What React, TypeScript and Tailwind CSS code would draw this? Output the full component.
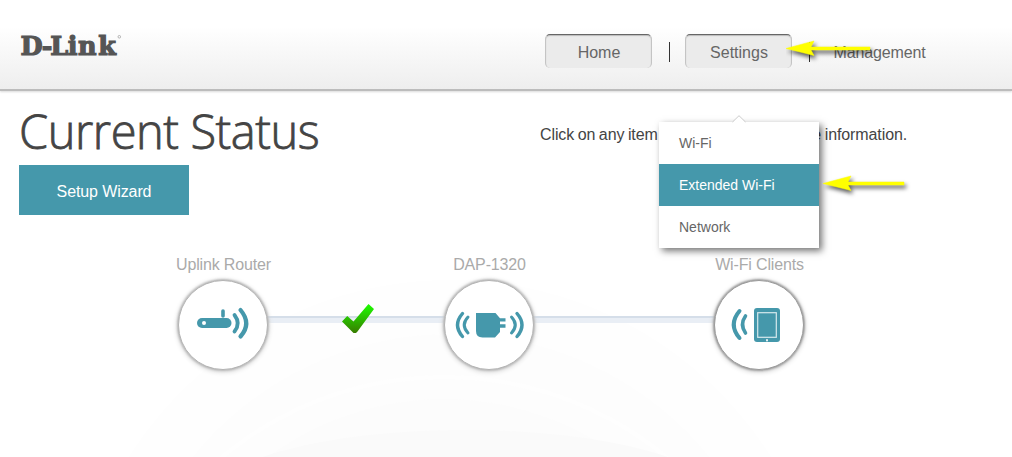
import React from 'react';

const Divider = () => <div className="-mr-px ml-px mt-[8px] h-5 w-px bg-[#333333]" />;

const NavButton = ({ label, raised }: { label: string; raised?: boolean }) => (
  <a
    className={
      raised
        ? 'flex h-[34px] w-[107px] items-center justify-center rounded-[5px] border-x border-t border-x-[#c4c4c4] border-t-[#666666] bg-[#ebebeb] pt-[2px] pl-px shadow-[inset_0_1px_1px_#bbbbbb]'
        : 'flex h-[34px] w-[107px] items-center justify-center border-t border-transparent pt-[2px] pl-[2px] tracking-[-0.15px]'
    }
  >
    {label}
  </a>
);

const menuItems = ['Wi-Fi', 'Extended Wi-Fi', 'Network'];

const SettingsMenu = () => (
  <div className="absolute top-[122px] left-[659px] w-[160px] bg-white text-sm text-[#666666] shadow-[3px_3px_7px_rgba(0,0,0,0.55)]">
    <svg className="absolute -top-[7px] left-[73px]" width="14" height="9" viewBox="0 0 14 9">
      <path d="M0.5 7.5L7 1L13.5 7.5V9H0.5Z" fill="#fff" />
      <path d="M0.5 7L7 0.7L13.5 7" fill="none" stroke="#cccccc" />
    </svg>
    {menuItems.map((item) => (
      <div
        key={item}
        className={
          item === 'Extended Wi-Fi'
            ? 'relative flex h-[42px] items-center bg-[#4598ab] px-5 text-white'
            : 'relative flex h-[42px] items-center px-5'
        }
      >
        {item}
      </div>
    ))}
  </div>
);

const RouterIcon = () => (
  <svg className="shrink-0" width="90" height="90" viewBox="0 0 90 90" fill="none" stroke="#4598ab" strokeLinecap="round">
    <rect x="19" y="38" width="34.5" height="10" rx="5" fill="#4598ab" stroke="none" />
    <circle cx="26" cy="43" r="2" fill="#fff" stroke="none" />
    <path d="M45 31V36" strokeWidth="3.6" />
    <path d="M56.5 35Q63 43.5 56.5 51.5" strokeWidth="3.8" />
    <path d="M62.5 30Q74 43.5 62.5 56.5" strokeWidth="4.2" />
  </svg>
);

const PlugIcon = () => (
  <svg className="shrink-0" width="90" height="90" viewBox="0 0 90 90" fill="none" stroke="#4598ab" strokeLinecap="round">
    <path
      d="M32 33H51.5L56 38.2H61.5V41.6H56V44.2H61.5V47.8H56V52L51 57.5H38.5Q32 57.5 32 51Z"
      fill="#4598ab"
      stroke="none"
    />
    <path d="M24 37Q16.5 45 24 53" strokeWidth="3" />
    <path d="M18.5 33.5Q8.5 45 18.5 56.5" strokeWidth="3.4" />
    <path d="M67.5 37Q75 45 67.5 53" strokeWidth="3" />
    <path d="M73 33.5Q83 45 73 56.5" strokeWidth="3.4" />
  </svg>
);

const TabletIcon = () => (
  <svg className="shrink-0" width="90" height="90" viewBox="0 0 90 90" fill="none" stroke="#4598ab" strokeLinecap="round">
    <rect x="40" y="28" width="26" height="34" rx="3" fill="#4598ab" stroke="none" />
    <rect x="43.7" y="32.7" width="18.6" height="24.6" stroke="#d5e9ed" strokeWidth="1.2" />
    <path d="M53 60V60.5" stroke="#fff" strokeWidth="1.8" />
    <path d="M31.5 36Q25.5 44.5 31.5 53" strokeWidth="3.6" />
    <path d="M25.5 31Q14 44.5 25.5 58" strokeWidth="4" />
  </svg>
);

const Node = ({ label, dark, children }: { label: string; dark?: boolean; children: React.ReactNode }) => (
  <div className="relative z-10 flex w-[90px] shrink-0 flex-col items-center gap-[5px]">
    <div className="h-5 pl-px text-base leading-5 tracking-[-0.15px] whitespace-nowrap text-[#aaaaaa]">{label}</div>
    <div
      className={
        dark
          ? 'flex h-[90px] w-[90px] items-center justify-center rounded-full border border-[#9a9a9a] bg-white shadow-[0_0_2px_1px_#a0a0a0,0_1px_5px_1px_#cfcfcf]'
          : 'flex h-[90px] w-[90px] items-center justify-center rounded-full border border-[#b4b4b4] bg-white shadow-[0_0_2px_1px_#bbbbbb,0_1px_5px_1px_#d6d6d6]'
      }
    >
      {children}
    </div>
  </div>
);

const Link = ({ className }: { className: string }) => (
  <div className={`-mx-2 mt-[61px] h-[7px] shrink-0 border-t-2 border-[#d5dee9] bg-[#e9eef5] ${className}`} />
);

const CheckMark = () => (
  <svg className="absolute top-[303px] left-[341px]" width="34" height="31" viewBox="0 0 34 31">
    <defs>
      <linearGradient id="check" x1="0" y1="0" x2="0" y2="1">
        <stop offset="0" stopColor="#1cff00" />
        <stop offset="1" stopColor="#387c00" />
      </linearGradient>
    </defs>
    <path d="M1 18.5L6.2 13L12.5 18.5L27.5 1L33 6L16.5 28.5L15 30H12.5Z" fill="url(#check)" />
  </svg>
);

const Arrow = ({ className, width }: { className: string; width: number }) => (
  <svg className={className} width={width + 12} height="26" viewBox={`0 0 ${width + 12} 26`}>
    <path
      d={`M0 8.5L28 1L25 7H${width}V10H25L28 15.5Z`}
      fill="#ffff00"
      stroke="#ffff00"
      strokeWidth="0.5"
      className="drop-shadow-[2px_3px_2px_rgba(0,0,0,0.65)]"
    />
  </svg>
);

// Faint concentric rings behind the diagram
const Rings = () => (
  <svg className="absolute inset-0 -z-10" width="1012" height="457" viewBox="0 0 1012 457">
    <circle cx="450" cy="660" r="380" fill="#fefefe" />
    <circle cx="451" cy="667" r="333" fill="#fdfdfd" />
    <circle cx="444" cy="725" r="348" fill="none" stroke="#fefefe" strokeWidth="4" />
    <circle cx="444" cy="695" r="296" fill="#fcfcfc" />
    <ellipse cx="465" cy="500" rx="257" ry="70" fill="#fafafa" />
  </svg>
);

const App = () => {
  return (
    <div className="relative isolate h-[457px] w-[1012px] overflow-hidden bg-white font-['Liberation_Sans',Arial,sans-serif]">
      <Rings />

      <header className="flex h-[91px] items-start border-b-2 border-[#bcbcbc] bg-linear-to-b from-white from-30% to-[#eeeeee] pl-5 shadow-[0_1px_2px_rgba(0,0,0,0.15)]">
        <svg className="mt-[32px] shrink-0" width="104" height="28" viewBox="0 0 104 28">
          <text
            x="0.5 21.7 30.2 47.8 58 78.3"
            y="22.8"
            fontFamily="'DejaVu Serif', serif"
            fontWeight="bold"
            fontSize="25.5"
            fill="#555555"
            stroke="#555555"
            strokeWidth="1.2"
          >
            D-Link
          </text>
          <circle cx="99.3" cy="4.8" r="1.3" fill="none" stroke="#999999" strokeWidth="0.7" />
        </svg>
        <nav className="mt-[34px] ml-[421px] flex gap-4 text-base text-[#666666]">
          <NavButton label="Home" raised />
          <Divider />
          <NavButton label="Settings" raised />
          <Divider />
          <NavButton label="Management" />
        </nav>
      </header>

      <main>
        <div className="flex h-[74px] items-start pl-[19px] text-[#444444]">
          <h1 className="w-[521px] pt-[9px] font-['Open_Sans'] text-[47px] leading-[62px] font-light tracking-[-0.45px] whitespace-nowrap [-webkit-text-stroke:0.8px_#444444]">
            Current Status
          </h1>
          <p className="pt-[32px] text-base tracking-[-0.1px] whitespace-nowrap [word-spacing:-0.8px]">
            Click on any item in the diagram for more information.
          </p>
        </div>
        <button className="ml-[19px] flex h-[50px] w-[170px] items-center justify-center bg-[#4598ab] pt-[3px] text-base tracking-[-0.1px] text-white">
          Setup Wizard
        </button>

        <section className="mt-[40px] ml-[178px] flex items-start">
          <Node label="Uplink Router">
            <RouterIcon />
          </Node>
          <Link className="w-[192px]" />
          <Node label="DAP-1320">
            <PlugIcon />
          </Node>
          <Link className="w-[196px]" />
          <Node label="Wi-Fi Clients" dark>
            <TabletIcon />
          </Node>
        </section>
      </main>

      <CheckMark />
      <SettingsMenu />
      <Arrow className="absolute top-[40px] left-[786px]" width={84} />
      <Arrow className="absolute top-[175px] left-[823px]" width={81} />
    </div>
  );
};

export default App;
